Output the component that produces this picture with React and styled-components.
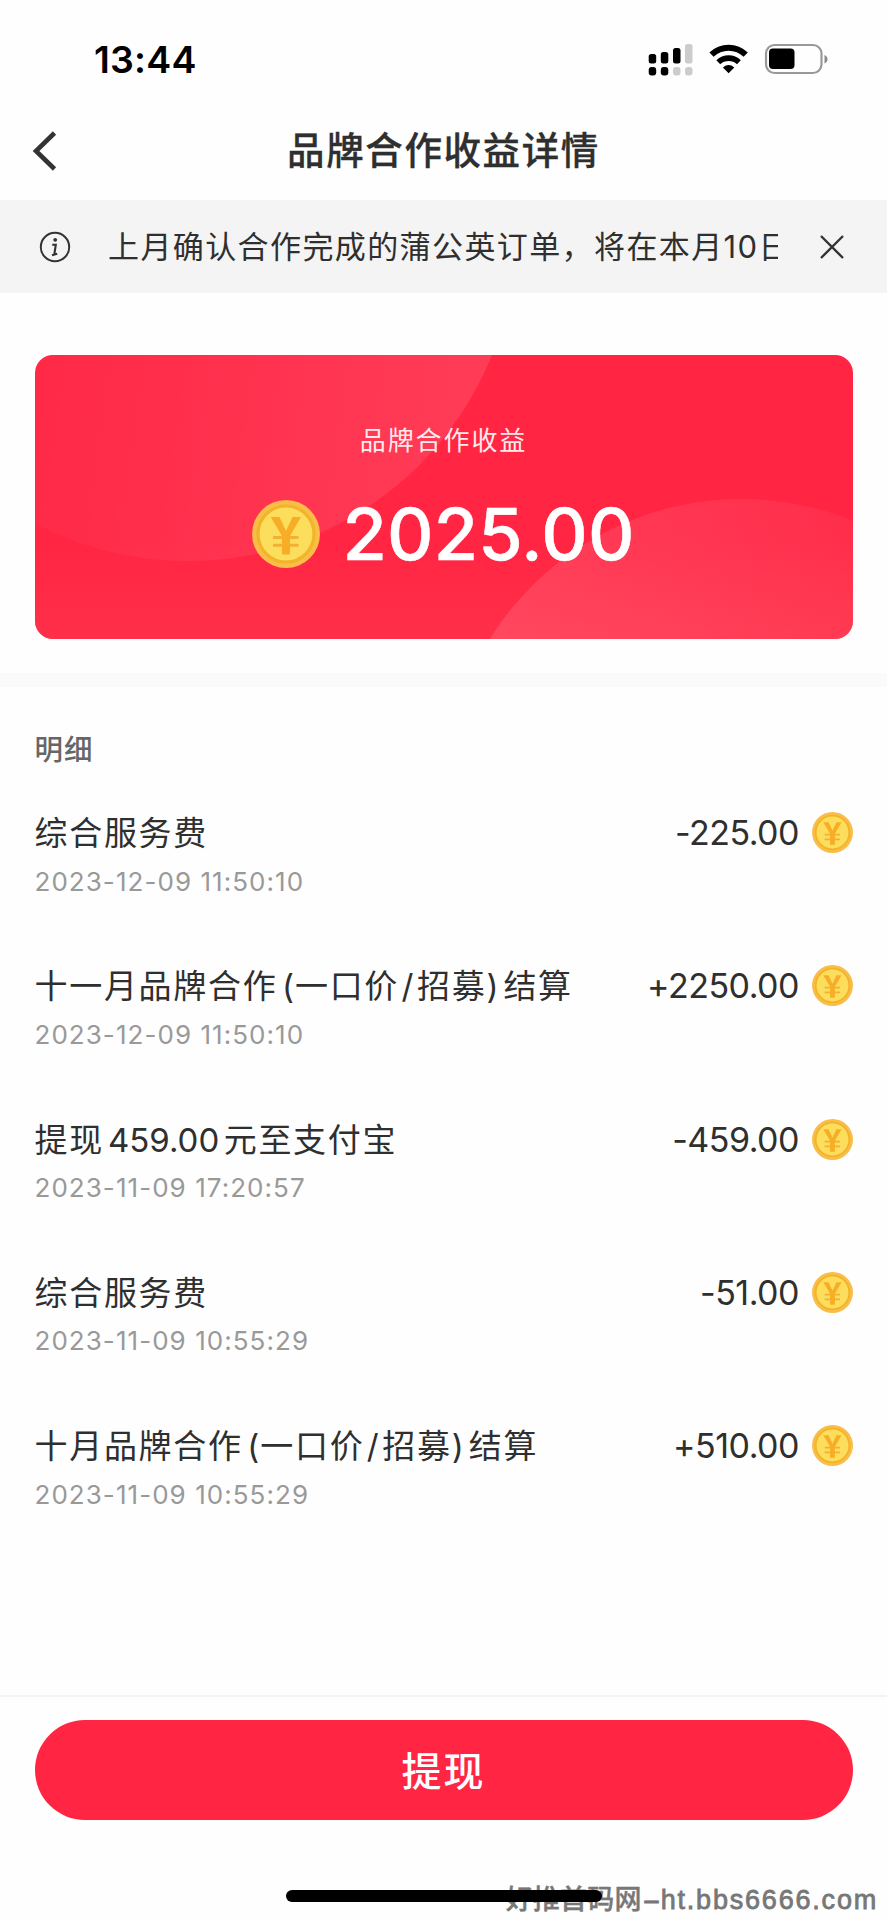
import React from 'react';
import styled, { createGlobalStyle } from 'styled-components';

const GlobalStyle = createGlobalStyle`
  * {
    box-sizing: border-box;
  }
  body {
    margin: 0;
    background: #fff;
  }
`;

const Page = styled.div`
  position: relative;
  display: flex;
  flex-direction: column;
  width: 887px;
  height: 1920px;
  overflow: hidden;
  background: #fefefe;
  color: #2f2f2f;
  font-family: Inter, 'Noto Sans CJK SC', sans-serif;
`;

const StatusBar = styled.div`
  display: flex;
  justify-content: space-between;
  align-items: center;
  height: 118px;
  padding: 0 59px 0 94px;
`;

const Time = styled.div`
  padding-top: 1px;
  font-size: 37.5px;
  font-weight: 600;
  line-height: 44px;
  letter-spacing: 0.2px;
  color: #000;
`;

const StatusIcons = styled.svg`
  display: block;
  width: 180px;
  height: 34px;
`;

const Header = styled.header`
  display: grid;
  grid-template-columns: 100px 1fr 100px;
  align-items: center;
  height: 82px;
  padding-bottom: 17px;
`;

const BackIcon = styled.svg`
  width: 26px;
  height: 42px;
  margin-left: 31px;
`;

const Title = styled.h1`
  margin: 0;
  text-align: center;
  font-size: 37.5px;
  font-weight: 500;
  line-height: 56px;
  letter-spacing: 1.6px;
  -webkit-text-stroke: 0.3px #2f2f2f;
`;

const Notice = styled.div`
  display: flex;
  align-items: center;
  height: 93px;
  padding: 0 42px 0 39px;
  background: #f4f4f4;
`;

const NoticeText = styled.div`
  width: 670px;
  margin-left: 37px;
  overflow: hidden;
  white-space: nowrap;
  font-size: 31px;
  line-height: 48px;
  letter-spacing: 1.4px;
`;

const CloseIcon = styled.svg`
  width: 26px;
  height: 26px;
  margin-left: auto;
`;

const Card = styled.section`
  display: grid;
  width: 818px;
  height: 284px;
  margin: 62px 0 0 34.5px;
  border-radius: 18px;
  overflow: hidden;
  background: #ff2543;
`;

const CardArt = styled.svg`
  grid-area: 1 / 1;
`;

const CardBody = styled.div`
  grid-area: 1 / 1;
  z-index: 1;
  display: flex;
  flex-direction: column;
  align-items: center;
  padding-top: 66px;
  color: #fff;
`;

const CardLabel = styled.div`
  font-size: 26px;
  line-height: 40px;
  letter-spacing: 1.9px;
  opacity: 0.9;
`;

const Balance = styled.div`
  display: flex;
  align-items: center;
  gap: 22px;
  margin-top: 30px;
  font-size: 72px;
  font-weight: 500;
  line-height: 86px;
  letter-spacing: 0.2px;
  -webkit-text-stroke: 0.5px #fff;
`;

const CoinSvg = styled.svg`
  display: block;
  flex: none;
  width: ${(props) => props.$size}px;
  height: ${(props) => props.$size}px;
`;

const Divider = styled.div`
  height: 14px;
  margin-top: 34px;
  background: #fafafa;
`;

const Details = styled.section`
  flex: 1;
  padding: 42px 34px 0 34.5px;
`;

const DetailsTitle = styled.h2`
  margin: 0;
  font-size: 28.5px;
  font-weight: 500;
  line-height: 42px;
  letter-spacing: 1px;
  color: #666;
`;

const Row = styled.div`
  display: flex;
  justify-content: space-between;
  height: 153.3px;
`;

const List = styled.div`
  padding-top: 37px;
`;

const RowTitle = styled.div`
  font-size: 33px;
  line-height: 50px;
  letter-spacing: 1.7px;
  white-space: nowrap;
`;

const Latin = styled.span`
  margin: 0 ${(props) => props.$after}px 0 ${(props) => props.$before}px;
  letter-spacing: 0;
`;

const RowDate = styled.div`
  margin-top: 7.5px;
  font-size: 26px;
  line-height: 32px;
  letter-spacing: 1.05px;
  color: #999;
`;

const Amount = styled.div`
  display: flex;
  align-items: center;
  gap: 13px;
  height: 49px;
  font-size: 34px;
  letter-spacing: -0.5px;
`;

const Footer = styled.footer`
  display: flex;
  flex-direction: column;
  align-items: center;
  height: 225px;
  padding-top: 23px;
  border-top: 2px solid #f3f3f3;
`;

const WithdrawButton = styled.button`
  width: 818px;
  height: 100px;
  padding: 0 0 3px;
  border: none;
  border-radius: 50px;
  background: #ff2543;
  color: #fff;
  font-family: inherit;
  font-size: 40px;
  font-weight: 500;
  letter-spacing: 2px;
`;

const HomeIndicator = styled.div`
  z-index: 2;
  width: 316px;
  height: 12px;
  margin-top: 70px;
  border-radius: 6px;
  background: #000;
`;

const Watermark = styled.div`
  position: absolute;
  right: 9px;
  bottom: 2px;
  display: flex;
  align-items: center;
  color: #777;
  font-family: 'Liberation Sans', 'Noto Sans CJK SC', sans-serif;
  font-size: 27px;
  font-weight: 500;
  line-height: 36px;
  letter-spacing: 1.8px;
  -webkit-text-stroke: 0.8px #777;
`;

const WatermarkName = styled.span`
  letter-spacing: 0.2px;
  -webkit-text-stroke: 0.4px #777;
`;

const WatermarkDash = styled.span`
  width: 19px;
  text-align: center;
  letter-spacing: 0;
  transform: scaleX(2);
`;

const Coin = ({ size }) => (
  <CoinSvg $size={size} viewBox="0 0 68 68">
    <circle cx="34" cy="34" r="34" fill="#f9bd48" />
    <circle cx="34" cy="34" r="28" fill="#fddd5c" stroke="#f1b42a" strokeWidth="3.2" />
    <path d="M21 37.500H46.500M21 45.300H46.500" fill="none" stroke="#f3b133" strokeWidth="3" />
    <path d="M18.700 17H27.500L34 31 40.500 17H49L38 36V54.500H30V36Z" fill="#f8ad27" />
  </CoinSvg>
);

// digits and brackets get a little air next to the Chinese characters
const spacing = {
  '(': [4.5, 1],
  '/': [2.5, 3.5],
  ')': [0, 5],
};

const MixedText = ({ text }) =>
  text.split(/([()/]|[\d.]+)/).map((part, index) => {
    if (index % 2 === 0) {
      return part;
    }
    const [before, after] = spacing[part] || [4, 4.5];
    return (
      <Latin key={index} $before={before} $after={after}>
        {part}
      </Latin>
    );
  });

const records = [
  { title: '综合服务费', date: '2023-12-09 11:50:10', amount: '-225.00' },
  { title: '十一月品牌合作(一口价/招募)结算', date: '2023-12-09 11:50:10', amount: '+2250.00' },
  { title: '提现459.00元至支付宝', date: '2023-11-09 17:20:57', amount: '-459.00' },
  { title: '综合服务费', date: '2023-11-09 10:55:29', amount: '-51.00' },
  { title: '十月品牌合作(一口价/招募)结算', date: '2023-11-09 10:55:29', amount: '+510.00' },
];

const App = () => (
  <Page>
    <GlobalStyle />
    <StatusBar>
      <Time>13:44</Time>
      <StatusIcons viewBox="0 0 180 34">
        {/* dual sim signal */}
        <rect x="0.7" y="12" width="7.500" height="9.500" rx="2.500" />
        <rect x="12.800" y="10" width="7.500" height="11.500" rx="2.500" />
        <rect x="25" y="6" width="7.500" height="15.500" rx="2.500" />
        <rect x="37" y="2" width="7.500" height="19.500" rx="2.500" fill="#ccc" />
        <rect x="0.7" y="25" width="7.500" height="8.500" rx="3" />
        <rect x="12.800" y="25" width="7.500" height="8.500" rx="3" />
        <rect x="25" y="25" width="7.500" height="8.500" rx="3" fill="#ccc" />
        <rect x="37" y="25" width="7.500" height="8.500" rx="3" fill="#ccc" />
        {/* wifi */}
        <path d="M63.500 12.700a24.500 24.500 0 0 1 34.200 0" fill="none" stroke="#000" strokeWidth="6" />
        <path d="M70.300 20.200a15 15 0 0 1 20.600 0" fill="none" stroke="#000" strokeWidth="5.600" />
        <path d="M74.900 25.500Q80.600 20.700 86.300 25.500L80.600 31.200Z" />
        {/* battery */}
        <rect x="118" y="3" width="55.500" height="28" rx="8.500" fill="none" stroke="#999" strokeWidth="2.200" />
        <rect x="121" y="6.500" width="25.500" height="20.500" rx="4" />
        <path d="M176.500 13v8.500q3-1.200 3-4.200t-3-4.300Z" fill="#8a8a8a" />
      </StatusIcons>
    </StatusBar>
    <Header>
      <BackIcon viewBox="0 0 26 42">
        <path d="M23.500 3 5 21 23.500 39" fill="none" stroke="#333" strokeWidth="4.600" />
      </BackIcon>
      <Title>品牌合作收益详情</Title>
    </Header>
    <Notice>
      <svg width="32" height="32" viewBox="0 0 32 32" fill="none" stroke="#333">
        <circle cx="16" cy="16" r="14.200" strokeWidth="2" />
        <circle cx="16.200" cy="8.800" r="1.900" fill="#333" stroke="none" />
        <path d="M13.200 13.800H16.800L15.200 24M13 24.200 18.200 22.800" strokeWidth="2.100" />
      </svg>
      <NoticeText>上月确认合作完成的蒲公英订单，将在本月10日</NoticeText>
      <CloseIcon viewBox="0 0 26 26">
        <path d="M2 2 24 24M24 2 2 24" stroke="#333" strokeWidth="2.400" />
      </CloseIcon>
    </Notice>
    <Card>
      <CardArt width="818" height="285" viewBox="34.500 354 818 285">
        <defs>
          <linearGradient id="topGlow" x1="0.300" y1="0.500" x2="1" y2="0.600">
            <stop offset="0" stopColor="#fff" stopOpacity="0.020" />
            <stop offset="1" stopColor="#fff" stopOpacity="0.110" />
          </linearGradient>
          <linearGradient id="bottomGlow" x1="0" y1="0.450" x2="0.850" y2="0.100">
            <stop offset="0" stopColor="#fff" stopOpacity="0.140" />
            <stop offset="1" stopColor="#fff" stopOpacity="0.030" />
          </linearGradient>
          <linearGradient id="floor" x1="0" y1="0" x2="0" y2="1">
            <stop offset="0.650" stopColor="#ff3a50" stopOpacity="0" />
            <stop offset="1" stopColor="#ff3a50" stopOpacity="0.500" />
          </linearGradient>
        </defs>
        <rect x="34" y="354" width="819" height="285" fill="url(#floor)" />
        <circle cx="187" cy="232" r="328" fill="url(#topGlow)" />
        <circle cx="741" cy="794" r="296" fill="url(#bottomGlow)" />
      </CardArt>
      <CardBody>
        <CardLabel>品牌合作收益</CardLabel>
        <Balance>
          <Coin size={68} />
          2025.00
        </Balance>
      </CardBody>
    </Card>
    <Divider />
    <Details>
      <DetailsTitle>明细</DetailsTitle>
      <List>
        {records.map((record, index) => (
          <Row key={index}>
            <div>
              <RowTitle>
                <MixedText text={record.title} />
              </RowTitle>
              <RowDate>{record.date}</RowDate>
            </div>
            <Amount>
              {record.amount}
              <Coin size={41} />
            </Amount>
          </Row>
        ))}
      </List>
    </Details>
    <Footer>
      <WithdrawButton>提现</WithdrawButton>
      <HomeIndicator />
    </Footer>
    <Watermark>
      <WatermarkName>好推首码网</WatermarkName>
      <WatermarkDash>-</WatermarkDash>
      ht.bbs6666.com
    </Watermark>
  </Page>
);

export default App;
